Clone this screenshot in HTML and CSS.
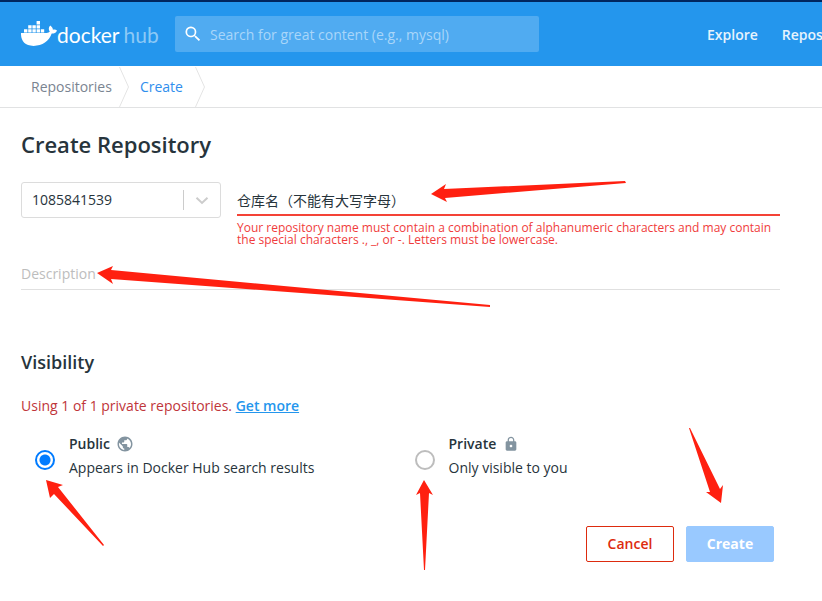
FILE: index.html
```html
<!DOCTYPE html>
<html lang="en">
<head>
<meta charset="utf-8">
<meta name="viewport" content="width=device-width, initial-scale=1">
<title>Create Repository - Docker Hub</title>
<link rel="stylesheet" href="styles.css">
</head>
<body>
<header class="topbar">
  <a class="brand" href="#">
    <svg class="whale" viewBox="0 0 36 26" width="36" height="26" aria-hidden="true">
      <path d="M0 12h25.600c1.400 0 2.700-.500 3.200-1.400-1.500-1.900-1.300-4.300.400-6.100 1.700 1.200 2.700 2.700 2.700 4.300 1.600-.400 3-.100 4.100.600-.900 2.200-2.700 3.200-5.300 3.200C28 20.500 21.500 24.900 12.500 24.900 3.500 24.900-.300 19.500 0 12z"/>
      <path d="M3 8.200h3.400v3.200H3zM7.200 8.200h3.400v3.200H7.200zM11.400 8.200h3.400v3.200h-3.400zM15.600 8.200H19v3.200h-3.400zM19.800 8.200h3.400v3.200h-3.400zM7.200 4.200h3.400v3.200H7.200zM11.400 4.200h3.400v3.200h-3.400zM15.600 4.200H19v3.200h-3.400zM15.600 0H19v3.400h-3.400z"/>
    </svg>
    <span class="brand-docker">docker</span><span class="brand-hub">hub</span>
  </a>
  <label class="search">
    <svg viewBox="0 0 24 24" width="20" height="20" aria-hidden="true"><path d="M15.500 14h-.790l-.280-.270A6.500 6.500 0 1 0 13.730 14.430l.270.280v.790l5 4.990L20.490 19zM9.500 14a4.500 4.500 0 1 1 0-9 4.500 4.500 0 0 1 0 9z"/></svg>
    <input type="search" aria-label="Search" placeholder="Search for great content (e.g., mysql)">
  </label>
  <nav class="links">
    <a href="#">Explore</a>
    <a href="#">Repositories</a>
  </nav>
</header>

<nav class="crumbs" aria-label="Breadcrumb">
  <a href="#">Repositories</a>
  <svg viewBox="0 0 10 41" width="10" height="41" aria-hidden="true"><path d="M.500 1l9 20-9 20"/></svg>
  <a class="current" href="#">Create</a>
  <svg viewBox="0 0 10 41" width="10" height="41" aria-hidden="true"><path d="M.500 1l9 20-9 20"/></svg>
</nav>

<main class="page">
  <h1>Create Repository</h1>
  <form>
    <div class="name-row">
      <div class="namespace">
        <select aria-label="Namespace"><option>1085841539</option></select>
        <svg viewBox="0 0 20 20" width="20" height="20" aria-hidden="true"><path d="M4.500 7.700l5.500 5.200 5.500-5.200"/></svg>
      </div>
      <div class="repo">
        <input type="text" id="repo-name" aria-label="Repository name" aria-describedby="repo-error" value="仓库名（不能有大写字母）">
        <p id="repo-error">Your repository name must contain a combination of alphanumeric characters and may contain the special characters ., _, or -. Letters must be lowercase.</p>
      </div>
    </div>
    <input class="description" type="text" aria-label="Description" placeholder="Description">

    <h2>Visibility</h2>
    <p class="usage">Using 1 of 1 private repositories. <a href="#">Get more</a></p>
    <div class="choices">
      <label class="choice">
        <input type="radio" name="visibility" checked>
        <span class="choice-text">
          <span class="choice-title">Public
            <svg viewBox="0 0 24 24" width="18" height="18" aria-hidden="true"><path d="M12 2C6.480 2 2 6.480 2 12s4.480 10 10 10 10-4.480 10-10S17.520 2 12 2zm-1 17.930c-3.950-.490-7-3.850-7-7.930 0-.620.080-1.210.210-1.790L9 15v1c0 1.100.900 2 2 2v1.930zm6.900-2.540c-.260-.810-1-1.390-1.900-1.390h-1v-3c0-.550-.450-1-1-1H8v-2h2c.550 0 1-.450 1-1V7h2c1.100 0 2-.900 2-2v-.410c2.930 1.190 5 4.060 5 7.410 0 2.080-.800 3.970-2.100 5.390z"/></svg>
          </span>
          <span>Appears in Docker Hub search results</span>
        </span>
      </label>
      <label class="choice">
        <input type="radio" name="visibility">
        <span class="choice-text">
          <span class="choice-title">Private
            <svg viewBox="0 0 24 24" width="18" height="16" aria-hidden="true"><path d="M18 8h-1V6c0-2.760-2.240-5-5-5S7 3.240 7 6v2H6c-1.100 0-2 .900-2 2v10c0 1.100.900 2 2 2h12c1.100 0 2-.900 2-2V10c0-1.100-.900-2-2-2zm-6 9c-1.100 0-2-.900-2-2s.900-2 2-2 2 .900 2 2-.900 2-2 2zm3.100-9H8.900V6c0-1.710 1.390-3.100 3.100-3.100s3.100 1.390 3.100 3.100z"/></svg>
          </span>
          <span>Only visible to you</span>
        </span>
      </label>
    </div>
    <div class="actions">
      <button class="cancel" type="button">Cancel</button>
      <button class="create" type="submit" disabled>Create</button>
    </div>
  </form>
</main>

<svg class="arrows" viewBox="0 0 822 601" width="822" height="601" aria-hidden="true">
  <path d="M431 194l15-10-2 5 181-8 1 2-181 15 2 4z"/>
  <path d="M97 273l16-7-2 4 379 35v2L111 279l2 5z"/>
  <path d="M46 480l17 5-5 2 46 58-1 1-49-52-4 4z"/>
  <path d="M424 480l9 15-4-2-4 77h-1l-4-77-4 2z"/>
  <path d="M689 428l1 0 30 61 3-4-2 18-15-11 4 0z"/>
</svg>
</body>
</html>
```

FILE: styles.css
```css
* { box-sizing: border-box; }

body {
  margin: 0;
  position: relative;
  background: #fff;
  color: #27343c;
  font: 14px/20px "Open Sans", "Noto Sans CJK SC", sans-serif;
  overflow-x: hidden;
}

input, select, button { font: inherit; color: inherit; }
a { text-decoration: none; }

/* Header */
.topbar {
  display: flex;
  align-items: center;
  height: 66px;
  padding-left: 21px;
  border-top: 2px solid #00265f;
  background: #2496ed;
  overflow: hidden;
}
.brand {
  display: flex;
  align-items: center;
  flex: none;
  width: 154px;
  color: #fff;
  font: 21px/28px Lato, sans-serif;
}
.whale { flex: none; fill: #fff; }
.brand-docker, .brand-hub { padding-top: 2px; }
.brand-hub { margin-left: 4px; color: #8cc9f6; }
.search {
  display: flex;
  align-items: center;
  flex: none;
  width: 364px;
  height: 36px;
  padding-left: 8px;
  border-radius: 2px;
  background: #50abf1;
}
.search svg { flex: none; fill: #fff; }
.search input {
  flex: 1;
  margin-left: 7px;
  padding: 2px 0 0;
  border: 0;
  outline: 0;
  background: none;
}
.search input::placeholder { color: #a9d6f9; opacity: 1; }
.links { display: flex; gap: 24px; margin-left: 168px; padding-top: 2px; }
.links a { color: #e6f3fd; font-weight: 600; }

/* Breadcrumb */
.crumbs {
  display: flex;
  align-items: center;
  height: 42px;
  padding-left: 31px;
  border-bottom: 1px solid #e1e2e3;
}
.crumbs a { color: #7a8491; }
.crumbs a.current { margin-left: 11px; color: #2f8eed; }
.crumbs svg { margin-left: 7px; fill: none; stroke: #e4e4e4; }
.crumbs a.current + svg { margin-left: 12px; }

/* Form */
.page { padding: 20px 42px 39px 21px; }
h1 { margin: 0 0 22px; font-size: 22px; line-height: 32px; font-weight: 600; }
.name-row { display: flex; gap: 16px; }
.namespace {
  display: flex;
  align-items: center;
  flex: none;
  width: 200px;
  height: 36px;
  border: 1px solid #dcdcdc;
  border-radius: 3px;
}
.namespace select {
  flex: 1;
  height: 20px;
  padding: 0 10px;
  border: 0;
  border-right: 1px solid #ccc;
  outline: 0;
  background: none;
  appearance: none;
}
.namespace svg { margin: 0 8px; fill: none; stroke: #ccc; stroke-width: 2; }
.repo { flex: 1; }
.repo input {
  display: block;
  width: 100%;
  height: 34px;
  padding: 4px 0 0;
  border: 0;
  border-bottom: 2px solid #f44336;
  outline: 0;
}
.repo p { margin: 6px 0 0; color: #f03c3c; font-size: 12px; line-height: 12px; }
.description {
  display: block;
  width: 100%;
  height: 32px;
  margin-top: 12px;
  padding: 0;
  border: 0;
  border-bottom: 1px solid #e0e0e0;
  outline: 0;
}
.description::placeholder { color: #bdbdbd; opacity: 1; }
h2 { margin: 60px 0 22px; font-size: 18px; line-height: 24px; font-weight: 600; }
.usage { margin: 0; color: #c0353a; }
.usage a { color: #2496ed; font-weight: 600; text-decoration: underline; }
.choices { display: grid; grid-template-columns: 1fr 1fr; margin-top: 16px; }
.choice { display: flex; align-items: center; padding-left: 14px; }
.choice input {
  flex: none;
  width: 20px;
  height: 20px;
  margin: 8px 14px 0 0;
  border: 2px solid #bdbdbd;
  border-radius: 50%;
  appearance: none;
}
.choice input:checked {
  border-color: #007bff;
  background: radial-gradient(circle, #007bff 5px, transparent 6px);
}
.choice-text { display: flex; flex-direction: column; line-height: 24px; }
.choice-title { display: flex; align-items: center; gap: 6px; font-weight: 600; }
.choice-title svg { fill: #8394a0; }
.actions { display: flex; justify-content: flex-end; gap: 12px; margin: 46px 6px 0 0; }
.actions button {
  width: 88px;
  height: 36px;
  padding: 0;
  border: 1px solid #dd2b0e;
  border-radius: 2px;
  background: #fff;
  color: #dd2b0e;
  font-weight: 600;
}
.actions .create { border-color: #99c9ff; background: #99c9ff; color: #fff; font-weight: 700; }

/* Pointer arrows over the form */
.arrows { position: absolute; top: 0; left: 0; fill: #ff2010; pointer-events: none; }
```
